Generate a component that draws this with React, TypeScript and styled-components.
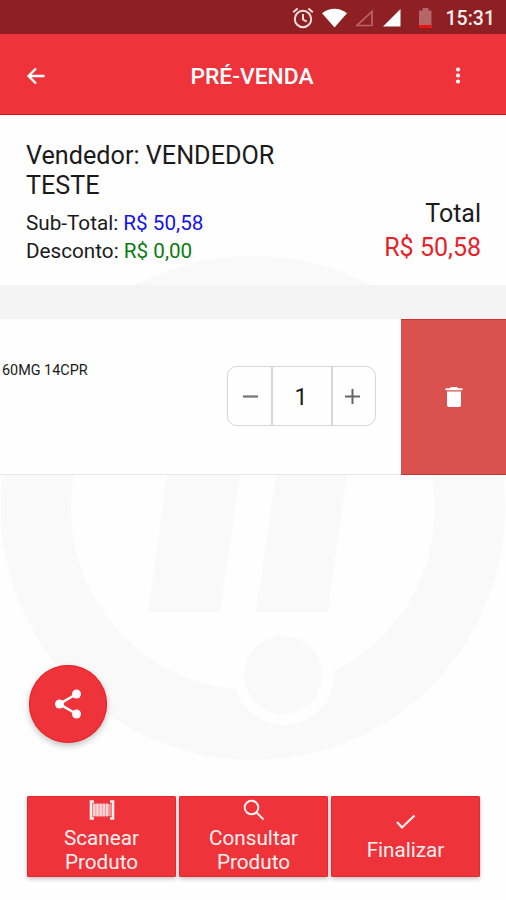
import React from 'react';
import styled, { createGlobalStyle } from 'styled-components';

const GlobalStyle = createGlobalStyle`
  *, *::before, *::after { box-sizing: border-box; }
  body { margin: 0; background: #fefefe; font-family: Roboto, "Liberation Sans", sans-serif; }
  button { font: inherit; border: 0; padding: 0; margin: 0; background: none; color: inherit; }
  svg { display: block; flex: none; }
`;

const Screen = styled.div`
  position: relative;
  display: flex;
  flex-direction: column;
  width: 506px;
  height: 900px;
  overflow: hidden;
  isolation: isolate;
  color: #1b1b1b;
`;

const Watermark = styled.svg`
  position: absolute;
  z-index: -1;
  left: 0;
  top: 255px;
`;

const StatusBar = styled.div`
  display: flex;
  align-items: center;
  justify-content: flex-end;
  height: 34px;
  padding: 1px 11px 0 0;
  background: #8e1f22;
  color: #fff;
`;

const AlarmIcon = styled.svg`
  margin-right: 7px;
`;

const Clock = styled.span`
  margin-left: 14px;
  padding-top: 2px;
  font-size: 19.5px;
  font-weight: 500;
  line-height: 30px;
  color: #fbeeee;
`;

const Header = styled.header`
  display: grid;
  grid-template-columns: 72px 1fr 98px;
  align-items: center;
  height: 81px;
  padding-top: 3px;
  background: #ee333a;
  border-bottom: 1px solid #d4151d;
  color: #fff;
`;

const Title = styled.h1`
  margin: 0;
  padding: 2px 0 0 24px;
  text-align: center;
  font-size: 22.8px;
  font-weight: 500;
  line-height: 28px;
`;

const IconButton = styled.button`
  display: flex;
  justify-content: center;
`;

const Summary = styled.section`
  display: flex;
  justify-content: space-between;
  height: 170px;
  padding: 26px 25px 0 26px;
`;

const Seller = styled.div`
  width: 290px;
  font-size: 25.2px;
  line-height: 29.5px;
`;

const Amounts = styled.div`
  margin-top: 9px;
  font-size: 20.7px;
  line-height: 28px;
`;

const Money = styled.span<{ $color: string }>`
  color: ${({ $color }) => $color};
`;

const Total = styled.div`
  padding-top: 56px;
  text-align: right;
  font-size: 25px;
  line-height: 34px;
`;

const Band = styled.div`
  height: 34px;
  background: #f4f4f4;
`;

const ItemRow = styled.section`
  display: flex;
  height: 156px;
  background: #fefefe;
  border-bottom: 1px solid #e6e6e6;
`;

const ItemName = styled.div`
  width: 227px;
  padding: 43px 0 0 2px;
  font-size: 14.4px;
  line-height: 18px;
`;

const Stepper = styled.div`
  display: grid;
  grid-template-columns: 43px 60px 44px;
  width: 149px;
  height: 60px;
  margin: 47px 25px 0 0;
  border: 1px solid #d6d6d6;
  border-radius: 10px;
`;

const StepCell = styled.div`
  display: flex;
  align-items: center;
  justify-content: center;
  & + & { border-left: 2px solid #d6d6d6; }
  &:first-child { padding-left: 2px; }
  &:last-child { padding-right: 4px; }
`;

const Quantity = styled.span`
  padding: 3px 2px 0 0;
  font-size: 23px;
  line-height: 28px;
`;

const DeleteButton = styled.button`
  display: flex;
  align-items: center;
  justify-content: center;
  flex: 1;
  height: 156px;
  background: #d9524e;
  border-top: 1px solid #c93632;
  border-bottom: 1px solid #c93632;
`;

const ShareButton = styled.button`
  display: flex;
  align-items: center;
  justify-content: center;
  width: 78px;
  height: 78px;
  margin: 190px 0 0 29px;
  border-radius: 50%;
  background: #ee333a;
  box-shadow: 0 3px 6px rgba(0, 0, 0, 0.24), inset 0 0 0 1px #e9262d;
`;

const Actions = styled.nav`
  display: grid;
  grid-template-columns: repeat(3, 149px);
  gap: 3px;
  margin: 53px 0 0 27px;
`;

const Action = styled.button`
  display: flex;
  flex-direction: column;
  align-items: center;
  justify-content: center;
  height: 81px;
  padding-bottom: 2px;
  border-radius: 2px;
  background: #ee333a;
  box-shadow: 0 2px 4px rgba(0, 0, 0, 0.24), inset 0 0 0 1px #e9262d;
  color: #fff1f0;
  font-size: 20.7px;
  line-height: 24px;
`;

const ActionIcon = styled.span`
  display: flex;
  align-items: center;
  height: 28px;
  padding-bottom: 4px;
`;

const bars = [5, 8.2, 11.4, 14.6, 17.8];

export default function App() {
  return (
    <>
      <GlobalStyle />
      <Screen>
        <Watermark width="506" height="507" viewBox="0 255 506 507" aria-hidden="true">
          <circle cx="253" cy="508" r="217" fill="none" stroke="#f9f9f9" strokeWidth="70" />
          <path d="M148 612 167 475H240L220 612ZM256 612 276 475H347L328 612Z" fill="#f9f9f9" />
          <circle cx="284" cy="675" r="50" fill="#fefefe" />
          <circle cx="283" cy="675" r="39" fill="#f9f9f9" />
        </Watermark>

        <StatusBar>
          <AlarmIcon width="22" height="22" viewBox="0 0 22 22" fill="none" stroke="#f6dede" strokeWidth="2">
            <circle cx="11" cy="12" r="8.2" />
            <path d="M11 7v5.5l3.7 2.2M1.2 5.2 5.6 1.6M20.8 5.2 16.4 1.6" />
          </AlarmIcon>
          <svg width="27" height="20" viewBox="0 0 27 20">
            <path d="M1 5.2Q13.500-3.500 26 5.2L13.500 19.5Z" fill="#fff" />
          </svg>
          <svg width="26" height="20" viewBox="0 0 26 20">
            <path d="M24 3.500V17.5H9Z" fill="none" stroke="#b96568" strokeWidth="1.7" />
          </svg>
          <svg width="27" height="20" viewBox="0 0 27 20">
            <path d="M26.500 1V18.5H9Z" fill="#fff" />
          </svg>
          <svg width="31" height="22" viewBox="0 0 31 22">
            <path d="M21.500 1H27.500V3.500H30.500V21H18V3.500H21.500Z" fill="#b56669" />
            <path d="M18 18H30.500V21H18Z" fill="#f0100f" />
          </svg>
          <Clock>15:31</Clock>
        </StatusBar>

        <Header>
          <IconButton aria-label="Voltar">
            <svg width="20" height="20" viewBox="0 0 20 20" fill="none" stroke="#fff" strokeWidth="2.4">
              <path d="M10 2.500 2.500 10 10 17.500M2.500 10H18.500" />
            </svg>
          </IconButton>
          <Title>PRÉ-VENDA</Title>
          <IconButton aria-label="Menu">
            <svg width="8" height="18" viewBox="0 0 8 18" fill="#fff">
              <circle cx="5" cy="2.500" r="2.100" />
              <circle cx="5" cy="8.500" r="2.100" />
              <circle cx="5" cy="14.500" r="2.100" />
            </svg>
          </IconButton>
        </Header>

        <Summary>
          <div>
            <Seller>Vendedor: VENDEDOR TESTE</Seller>
            <Amounts>
              <div>Sub-Total: <Money $color="#1713e8">R$ 50,58</Money></div>
              <div>Desconto: <Money $color="#0b7b12">R$ 0,00</Money></div>
            </Amounts>
          </div>
          <Total>
            <div>Total</div>
            <Money $color="#e5232b">R$ 50,58</Money>
          </Total>
        </Summary>
        <Band />

        <ItemRow>
          <ItemName>60MG 14CPR</ItemName>
          <Stepper>
            <StepCell>
              <svg width="15" height="15" viewBox="0 0 15 15" stroke="#777" strokeWidth="2.3">
                <path d="M0 7.500H15" />
              </svg>
            </StepCell>
            <StepCell><Quantity>1</Quantity></StepCell>
            <StepCell>
              <svg width="15" height="15" viewBox="0 0 15 15" stroke="#666" strokeWidth="2">
                <path d="M0 7.500H15M7.500 0V15" />
              </svg>
            </StepCell>
          </Stepper>
          <DeleteButton aria-label="Excluir">
            <svg width="18" height="22" viewBox="0 0 18 22" fill="#fff">
              <path d="M.500 2.200H5L6 1H12L13 2.200H17.500V4.300H.500ZM2 5.600H16V19Q16 21 14 21H4Q2 21 2 19Z" />
            </svg>
          </DeleteButton>
        </ItemRow>

        <ShareButton aria-label="Compartilhar">
          <svg width="28" height="30" viewBox="0 0 28 30" fill="#fff">
            <path d="M22.500 5 5.500 15 22.500 25" fill="none" stroke="#fff" strokeWidth="2.6" />
            <circle cx="22.500" cy="5" r="4.500" />
            <circle cx="5.500" cy="15" r="4.500" />
            <circle cx="22.500" cy="25" r="4.500" />
          </svg>
        </ShareButton>

        <Actions>
          <Action>
            <ActionIcon>
              <svg width="26" height="22" viewBox="0 0 26 22">
                <path d="M5 2.500H2V19.500H5M21 2.500H24V19.500H21" fill="none" stroke="#fff1f0" strokeWidth="2.6" />
                <path d="M3.500 5H22.500V17H3.500Z" fill="#f78f91" />
                <g fill="#ffd6d5">
                  {bars.map((x) => (
                    <rect key={x} x={x - 0.9} y="4.500" width="2.3" height="13" />
                  ))}
                </g>
              </svg>
            </ActionIcon>
            <span>Scanear</span>
            <span>Produto</span>
          </Action>
          <Action>
            <ActionIcon>
              <svg width="22" height="22" viewBox="0 0 22 22" fill="none" stroke="#fff1f0" strokeWidth="2">
                <circle cx="8.500" cy="8.500" r="6.800" />
                <path d="m13.500 13.500 7 7" />
              </svg>
            </ActionIcon>
            <span>Consultar</span>
            <span>Produto</span>
          </Action>
          <Action>
            <ActionIcon>
              <svg width="20" height="16" viewBox="0 0 20 16" fill="none" stroke="#fff1f0" strokeWidth="2.2">
                <path d="m1 8 5 5.500L18.500 1.500" />
              </svg>
            </ActionIcon>
            <span>Finalizar</span>
          </Action>
        </Actions>
      </Screen>
    </>
  );
}
